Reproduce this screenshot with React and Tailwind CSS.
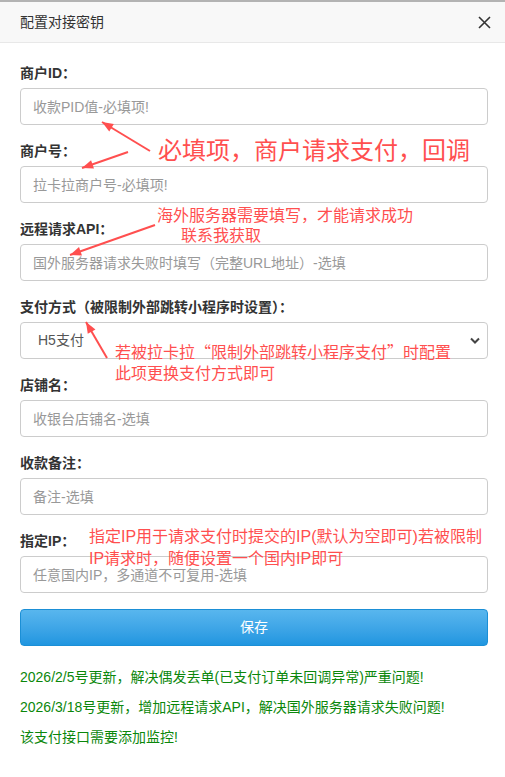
import React from 'react';

const fields = [
  { label: '商户ID：', placeholder: '收款PID值-必填项!' },
  { label: '商户号：', placeholder: '拉卡拉商户号-必填项!' },
  { label: '远程请求API：', placeholder: '国外服务器请求失败时填写（完整URL地址）-选填' },
  { label: '支付方式（被限制外部跳转小程序时设置）：', select: true },
  { label: '店铺名：', placeholder: '收银台店铺名-选填' },
  { label: '收款备注：', placeholder: '备注-选填' },
  { label: '指定IP：', placeholder: '任意国内IP，多通道不可复用-选填' },
];

const notes = [
  '2026/2/5号更新，解决偶发丢单(已支付订单未回调异常)严重问题!',
  '2026/3/18号更新，增加远程请求API，解决国外服务器请求失败问题!',
  '该支付接口需要添加监控!',
];

// hint arrows: [fromX, fromY, toX, toY]
const arrows = [
  [150, 151, 102, 122],
  [128, 152, 82, 168],
  [155, 225, 70, 255],
  [107, 358, 86, 322],
];

const arrowHead = ([x1, y1, x2, y2]) => {
  const a = Math.atan2(y2 - y1, x2 - x1);
  const len = 12;
  const w = 0.38;
  const p1 = [x2 - len * Math.cos(a - w), y2 - len * Math.sin(a - w)];
  const p2 = [x2 - len * Math.cos(a + w), y2 - len * Math.sin(a + w)];
  return `${x2},${y2} ${p1[0]},${p1[1]} ${p2[0]},${p2[1]}`;
};

const font = { fontFamily: '"Liberation Sans", "Noto Sans CJK SC", sans-serif' };
const cjk = { fontFamily: '"Noto Sans CJK SC", sans-serif' };

const Field = ({ field }) => (
  <div className="mb-4">
    <label className="block text-[14px] leading-5 font-bold text-[#333] mb-[5px]">
      {field.label}
    </label>
    {field.select ? (
      <div className="relative">
        <select className="w-full h-[37px] appearance-none border border-[#ccc] rounded-[4px] bg-white pl-[17px] text-[14px] text-[#555] outline-none">
          <option>H5支付</option>
          <option>小程序支付</option>
        </select>
        <svg className="absolute right-[8px] top-[15px]" width="10" height="7" viewBox="0 0 10 7">
          <path d="M1 1.5 L5 5.5 L9 1.5" fill="none" stroke="#444" strokeWidth="2" />
        </svg>
      </div>
    ) : (
      <input
        className="w-full h-[37px] border border-[#ccc] rounded-[4px] px-3 text-[14px] text-[#333] placeholder:text-[#999] outline-none"
        placeholder={field.placeholder}
      />
    )}
  </div>
);

export default function App() {
  return (
    <div className="relative w-[505px] h-[777px] bg-white overflow-hidden" style={font}>
      <div className="h-[2px] bg-[#b3b3b3]" />
      <div className="h-[41px] bg-[#f8f8f8] border-b border-[#e8e8e8] flex items-center justify-between pl-5 pr-[14px]">
        <span className="text-[14px] text-[#333]">配置对接密钥</span>
        <svg width="13" height="13" viewBox="0 0 13 13">
          <path d="M1 1 L12 12 M12 1 L1 12" stroke="#333" strokeWidth="1.6" />
        </svg>
      </div>

      <div className="pl-5 pr-[17px] pt-5">
        {fields.map((f) => (
          <Field key={f.label} field={f} />
        ))}
        <button className="w-full h-[37px] rounded-[4px] border border-[#1b8fd6] bg-gradient-to-b from-[#58b6ee] to-[#1f96e0] text-white text-[14px]">
          保存
        </button>
        <div className="mt-[21px] text-[14px] leading-5 text-[#0b870b]">
          {notes.map((n) => (
            <p key={n} className="mb-[10px]">{n}</p>
          ))}
        </div>
      </div>

      {/* red hint notes laid over the form */}
      <div className="absolute left-[158px] top-[135px] text-[24px] leading-7 text-[#ff4f4f] whitespace-nowrap" style={cjk}>
        必填项，商户请求支付，回调
      </div>
      <div className="absolute left-[157px] top-[204px] text-[16px] leading-5 text-[#ff4f4f] whitespace-nowrap" style={cjk}>
        <div>海外服务器需要填写，才能请求成功</div>
        <div className="pl-6">联系我获取</div>
      </div>
      <div className="absolute left-[115px] top-[341px] text-[16px] leading-[21px] text-[#ff4f4f] whitespace-nowrap" style={cjk}>
        <div>若被拉卡拉“限制外部跳转小程序支付”时配置</div>
        <div>此项更换支付方式即可</div>
      </div>
      <div className="absolute left-[89px] top-[526px] text-[16px] leading-[22px] text-[#ff4f4f] whitespace-nowrap" style={font}>
        <div>指定IP用于请求支付时提交的IP(默认为空即可)若被限制</div>
        <div>IP请求时，随便设置一个国内IP即可</div>
      </div>
      <svg className="absolute inset-0 pointer-events-none" width="505" height="777">
        {arrows.map((a, i) => (
          <g key={i}>
            <line x1={a[0]} y1={a[1]} x2={a[2]} y2={a[3]} stroke="#ff4f4f" strokeWidth="2" />
            <polygon points={arrowHead(a)} fill="#ff4f4f" />
          </g>
        ))}
      </svg>
    </div>
  );
}
